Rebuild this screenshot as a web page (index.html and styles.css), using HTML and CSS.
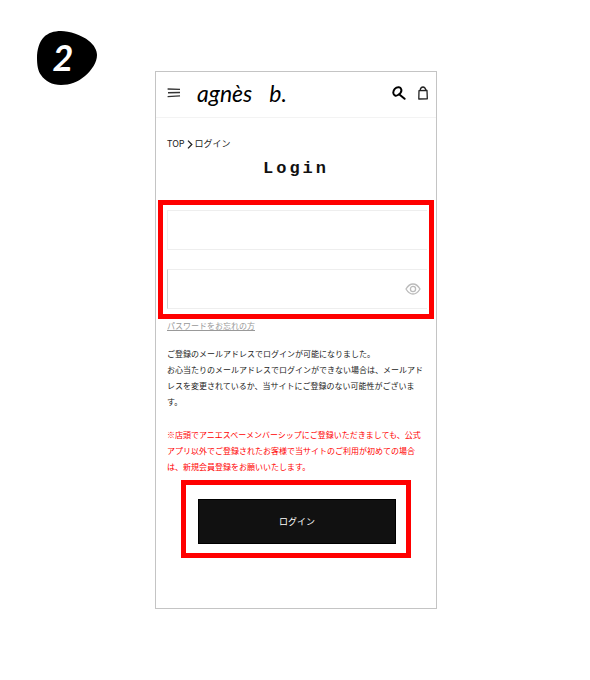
FILE: index.html
```html
<!DOCTYPE html>
<html lang="ja">
<head>
  <meta charset="UTF-8">
  <meta name="viewport" content="width=device-width, initial-scale=1.0">
  <title>ログイン</title>
  <link rel="stylesheet" href="styles.css">
</head>
<body>
  <main class="step">
    <div class="step-badge">
      <svg class="step-shape" viewBox="0 0 60 54" aria-hidden="true">
        <path d="M24 0 C32 0 45 4 52 10 C57 14 60 19 60 24 C60 31 55 39 48 45 C41 51 33 54 24 54 C15 54 8 50 4 44 C1 40 0 34 0 27 C0 19 2 11 7 6 C11 2 17 0 24 0 Z"/>
      </svg>
      <span class="step-number">2</span>
    </div>

    <div class="screen">
      <header class="header">
        <button class="icon-btn" type="button" aria-label="メニュー">
          <svg width="14" height="12" viewBox="0 0 14 12">
            <path d="M0.6 2 L13 2.4 M1 5.8 L13 5.5 M0.6 9.6 L13 8.9" fill="none" stroke="#333" stroke-width="1.4"/>
          </svg>
        </button>
        <a class="logo" href="#"><span>agnès</span><span>b.</span></a>
        <button class="icon-btn" type="button" aria-label="検索">
          <svg width="14" height="14" viewBox="0 0 14 14">
            <path d="M7 1.2 C3.6 0.8 1 4 1.3 7 C1.6 9.8 4 10.2 6 9 C8.4 7.6 9.8 5.2 9.2 3.2 C8.8 1.9 8.2 1.3 7 1.2 M7.4 8.4 L12.6 12.8" fill="none" stroke="#000" stroke-width="2" stroke-linecap="round"/>
          </svg>
        </button>
        <button class="icon-btn" type="button" aria-label="カート">
          <svg width="10" height="14" viewBox="0 0 10 14">
            <path d="M1 4.6 L9 4.4 L9.3 12.8 L0.8 13 Z M2 4.6 C2.4 2.4 3.6 1 5 1 C6.6 1 7.5 2.4 8 4.4" fill="none" stroke="#222" stroke-width="1.3" stroke-linejoin="round"/>
          </svg>
        </button>
      </header>

      <nav class="breadcrumb">
        <a href="#">TOP</a>
        <svg width="6" height="9" viewBox="0 0 6 9" aria-hidden="true">
          <path d="M1 0.6 L4.8 4.5 L1 8.4" fill="none" stroke="#222" stroke-width="1.3"/>
        </svg>
        <span>ログイン</span>
      </nav>

      <h1 class="title">Login</h1>

      <form class="login-form">
        <div class="fields highlight">
          <input class="field" type="email" aria-label="メールアドレス">
          <div class="field password">
            <input class="password-input" type="password" aria-label="パスワード">
            <button class="icon-btn" type="button" aria-label="パスワードを表示">
              <svg width="16" height="12" viewBox="0 0 16 12" fill="none" stroke="#bbb" stroke-width="1.3">
                <path d="M1 6 C3 2.6 5.2 1 8 1 C10.8 1 13 2.6 15 6 C13 9.4 10.8 11 8 11 C5.2 11 3 9.4 1 6 Z"/>
                <circle cx="8" cy="6" r="2.6"/>
              </svg>
            </button>
          </div>
        </div>

        <a class="forgot" href="#">パスワードをお忘れの方</a>

        <p class="note">ご登録のメールアドレスでログインが可能になりました。<br>お心当たりのメールアドレスでログインができない場合は、メールアドレスを変更されているか、当サイトにご登録のない可能性がございます。</p>
        <p class="note warning">※店頭でアニエスベーメンバーシップにご登録いただきましても、公式アプリ以外でご登録されたお客様で当サイトのご利用が初めての場合は、新規会員登録をお願いいたします。</p>

        <div class="submit highlight">
          <button class="submit-btn" type="submit">ログイン</button>
        </div>
      </form>
    </div>
  </main>
</body>
</html>
```
FILE: styles.css
```css
* {
  margin: 0;
  padding: 0;
  box-sizing: border-box;
}

body {
  font-family: "Noto Sans CJK JP", sans-serif;
  font-size: 8px;
  line-height: 16px;
  background-color: #fff;
  color: #222;
}

a {
  color: inherit;
  text-decoration: none;
}

/* Badge on the left, phone screen in the middle */
.step {
  display: grid;
  grid-template-columns: 1fr minmax(0, 282px) 1fr;
  align-items: start;
  padding: 31px 35px 40px 37px;
}

.step-badge {
  display: grid;
  place-items: center;
  width: 60px;
}

.step-shape,
.step-number {
  grid-area: 1 / 1;
}

.step-shape {
  display: block;
  width: 100%;
}

.step-number {
  position: relative; /* keep the number above the shape */
  padding: 0 8px 2px 0;
  font-family: Lato, sans-serif;
  font-size: 36px;
  font-style: italic;
  font-weight: bold;
  line-height: 36px;
  color: #fff;
}

.screen {
  margin-top: 40px;
  padding-bottom: 50px;
  border: 1px solid #c4c4c4;
}

.header {
  display: flex;
  align-items: center;
  gap: 12px;
  height: 46px;
  padding: 0 8px 4px 11px;
  border-bottom: 1px solid #f3f3f3;
}

.icon-btn {
  flex: none;
  border: none;
  background: none;
  cursor: pointer;
}

.icon-btn svg {
  display: block;
}

.logo {
  display: flex;
  gap: 17px;
  margin: 0 auto 0 4px;
  font-family: Lato, sans-serif;
  font-size: 23px;
  font-style: italic;
  line-height: 24px;
  color: #000;
}

.breadcrumb {
  display: flex;
  align-items: center;
  gap: 2px;
  margin-top: 18px;
  padding-left: 11px;
  font-size: 9px;
}

.title {
  margin-top: 7px;
  font-family: "Liberation Mono", monospace;
  font-size: 17px;
  letter-spacing: 3px;
  line-height: 20px;
  text-align: center;
  color: #111;
}

.highlight {
  border: 5px solid #f00;
}

.fields {
  display: flex;
  flex-direction: column;
  gap: 19px;
  margin: 21px 2px 0;
  padding: 5px 2px 5px 4px;
}

.field {
  width: 100%;
  height: 40px;
  border: 1px solid #eee;
  border-right: none;
  outline: none;
}

.password {
  display: flex;
  align-items: center;
  padding-right: 6px;
  border-left-color: #ccc;
}

.password-input {
  flex: 1;
  min-width: 0;
  height: 100%;
  border: none;
  outline: none;
}

.forgot {
  display: block;
  padding-left: 11px;
  line-height: 14px;
  color: #999;
  text-decoration: underline;
}

.note {
  margin-top: 13px;
  padding: 0 12px 0 11px;
}

.warning {
  margin-top: 17px;
  color: #f00;
}

.submit {
  margin: 5px 25px 0;
  padding: 14px 10px 9px 12px;
}

.submit-btn {
  display: block;
  width: 100%;
  height: 45px;
  border: 1px solid #000;
  background-color: #111;
  font-family: inherit;
  font-size: 9px;
  color: #fff;
  cursor: pointer;
}
```
